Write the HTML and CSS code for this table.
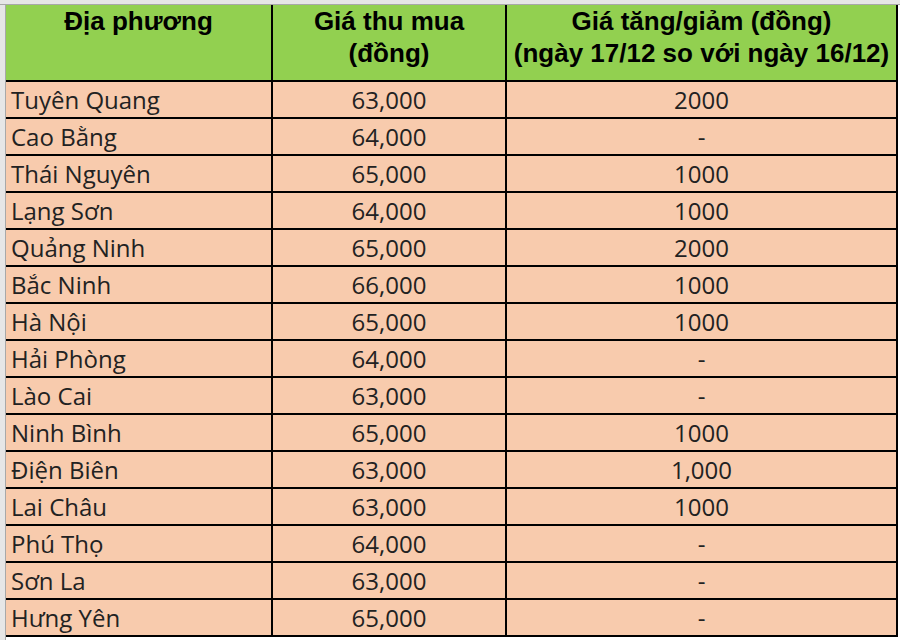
FILE: index.html
```html
<!DOCTYPE html>
<html lang="vi">
<head>
<meta charset="utf-8">
<title>Giá thu mua</title>
<link rel="stylesheet" href="styles.css">
</head>
<body>
<div class="sheet">
  <div class="topbar"></div>
  <div class="main">
    <div class="leftbar"></div>
    <div class="table">
      <div class="cell head">Địa phương</div>
      <div class="cell head">Giá thu mua<br>(đồng)</div>
      <div class="cell head">Giá tăng/giảm (đồng)<br>(ngày 17/12 so với ngày 16/12)</div>

      <div class="cell name">Tuyên Quang</div><div class="cell num">63,000</div><div class="cell num">2000</div>
      <div class="cell name">Cao Bằng</div><div class="cell num">64,000</div><div class="cell num">-</div>
      <div class="cell name">Thái Nguyên</div><div class="cell num">65,000</div><div class="cell num">1000</div>
      <div class="cell name">Lạng Sơn</div><div class="cell num">64,000</div><div class="cell num">1000</div>
      <div class="cell name">Quảng Ninh</div><div class="cell num">65,000</div><div class="cell num">2000</div>
      <div class="cell name">Bắc Ninh</div><div class="cell num">66,000</div><div class="cell num">1000</div>
      <div class="cell name">Hà Nội</div><div class="cell num">65,000</div><div class="cell num">1000</div>
      <div class="cell name">Hải Phòng</div><div class="cell num">64,000</div><div class="cell num">-</div>
      <div class="cell name">Lào Cai</div><div class="cell num">63,000</div><div class="cell num">-</div>
      <div class="cell name">Ninh Bình</div><div class="cell num">65,000</div><div class="cell num">1000</div>
      <div class="cell name">Điện Biên</div><div class="cell num">63,000</div><div class="cell num">1,000</div>
      <div class="cell name">Lai Châu</div><div class="cell num">63,000</div><div class="cell num">1000</div>
      <div class="cell name">Phú Thọ</div><div class="cell num">64,000</div><div class="cell num">-</div>
      <div class="cell name">Sơn La</div><div class="cell num">63,000</div><div class="cell num">-</div>
      <div class="cell name">Hưng Yên</div><div class="cell num">65,000</div><div class="cell num">-</div>
    </div>
  </div>
</div>
</body>
</html>
```

FILE: styles.css
```css
* { box-sizing: border-box; }

html, body {
  margin: 0;
  padding: 0;
  background: #ffffff;
}

body {
  width: 900px;
  height: 640px;
  overflow: hidden;
}

.sheet {
  display: flex;
  flex-direction: column;
  height: 640px;
}

.topbar {
  flex: none;
  height: 5px;
  background: #e6e6e6;
  border-bottom: 1px solid #a8a8a8;
}

.main {
  display: flex;
  flex: 1;
}

.leftbar {
  flex: none;
  width: 6px;
  background: #e6e6e6;
  border-right: 1px solid #a8a8a8;
}

.table {
  display: grid;
  grid-template-columns: 267px 234px 391px;
  grid-template-rows: 77px;
  grid-auto-rows: 37px;
  align-content: start;
}

.cell {
  border-right: 2px solid #000;
  border-bottom: 2px solid #000;
  background: #f8cbad;
  color: #222222;
  font-family: "Open Sans", "Noto Sans", sans-serif;
  font-size: 24px;
  line-height: 35px;
  white-space: nowrap;
  overflow: hidden;
}

.head {
  background: #92d050;
  color: #000;
  font-family: "Liberation Sans", Arial, sans-serif;
  font-weight: bold;
  font-size: 26px;
  line-height: 32px;
  text-align: center;
}

.name {
  padding-left: 5px;
}

.num {
  text-align: center;
}
```
